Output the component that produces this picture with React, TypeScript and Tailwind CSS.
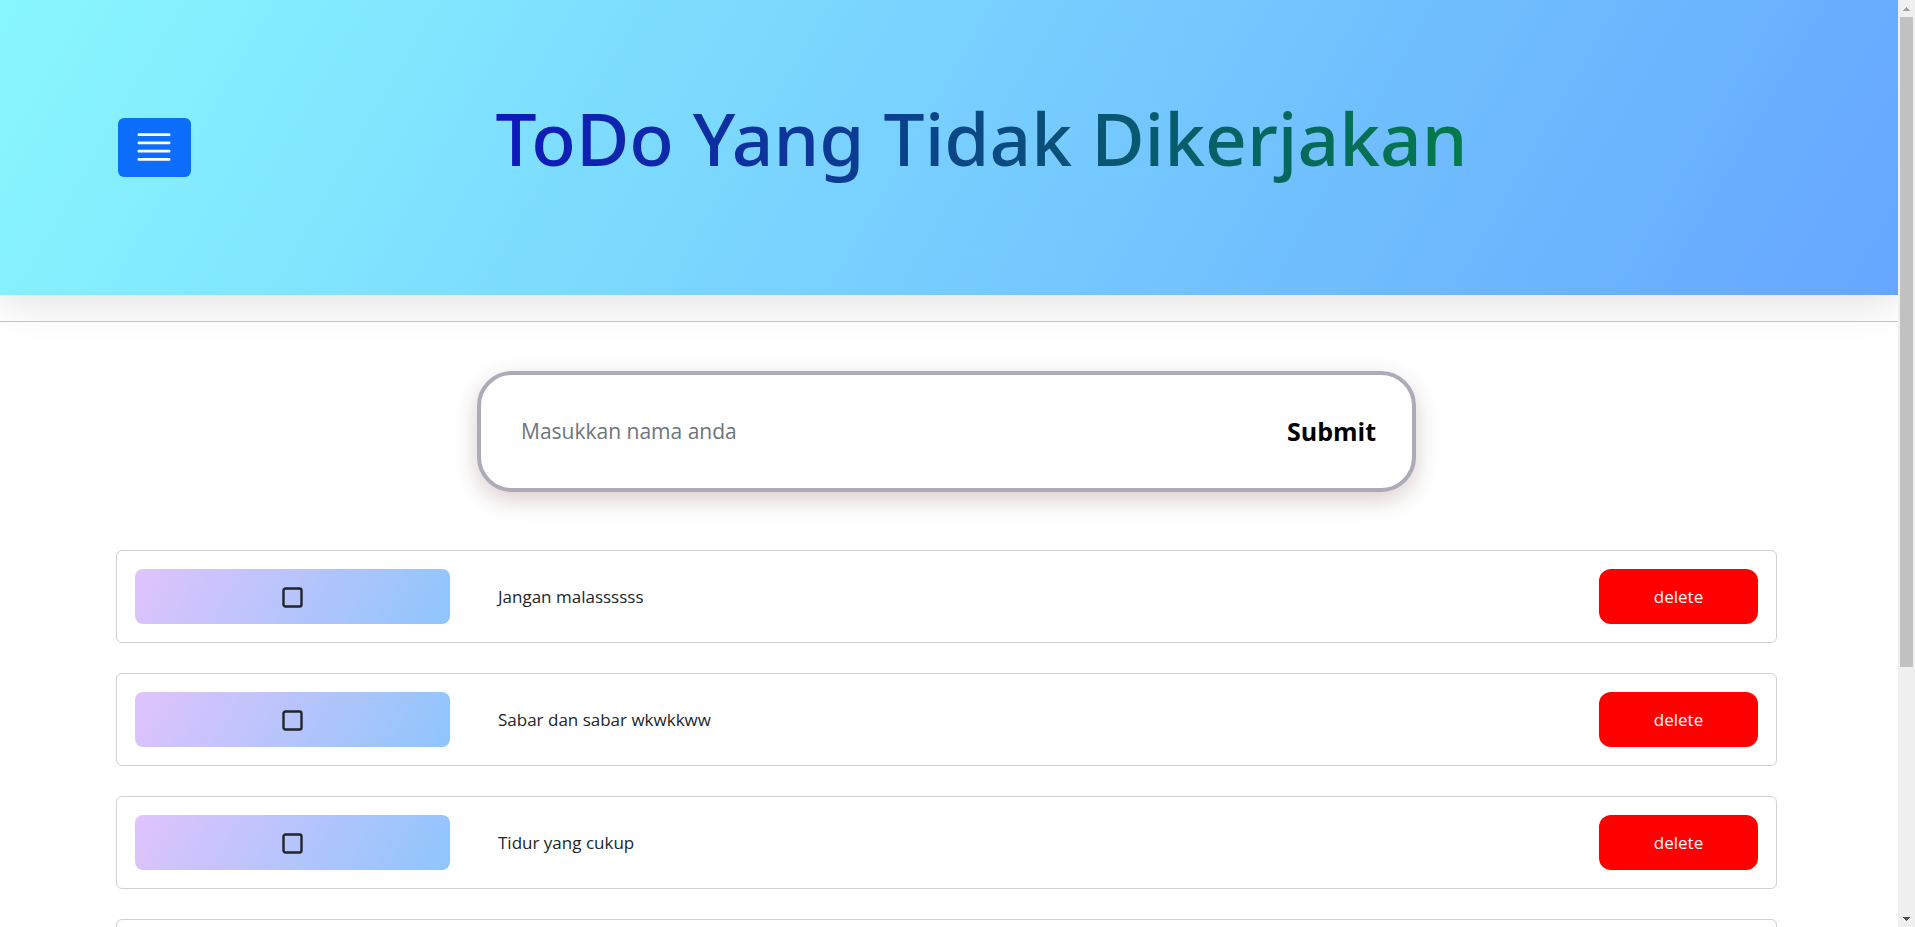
import { BsJustify } from "react-icons/bs";

const todos = [
  "Jangan malassssss",
  "Sabar dan sabar wkwkkww",
  "Tidur yang cukup",
];

function Header() {
  return (
    <header className="relative flex h-[295px] shrink-0 items-center bg-[linear-gradient(120deg,#89f7fe_0%,#66a6ff_100%)] pr-[126px] pl-[118px] shadow-[0_8px_40px_rgba(0,0,0,0.12)]">
      <button
        type="button"
        aria-label="Menu"
        className="flex h-[59px] w-[73px] items-center justify-center rounded-md bg-[#0d6efd] pr-0.5 pb-0.5 text-white"
      >
        <BsJustify size={44} />
      </button>
      <div className="flex flex-1 justify-center pb-5">
        <h1 className="bg-[linear-gradient(to_right,#1018bd,#047a48)] bg-clip-text font-['Noto_Sans','Open_Sans',sans-serif] text-[73px] leading-[100px] font-medium whitespace-nowrap text-transparent">
          ToDo Yang Tidak Dikerjakan
        </h1>
      </div>
    </header>
  );
}

function TodoForm() {
  return (
    <form
      onSubmit={(event) => event.preventDefault()}
      className="mx-auto flex h-[121px] w-full max-w-[939px] items-center rounded-[35px] border-4 border-[#adabba] bg-white pr-9 pl-10 shadow-[0_8px_24px_rgba(80,0,0,0.2)]"
    >
      <input
        type="text"
        aria-label="Nama"
        placeholder="Masukkan nama anda"
        className="min-w-0 flex-1 text-[21px] outline-none placeholder:text-[#6c757d]"
      />
      <button type="submit" className="text-[25px] font-bold text-black">
        Submit
      </button>
    </form>
  );
}

function TodoItem({ text }: { text: string }) {
  return (
    <li className="flex items-center rounded-md border border-[#d0d1d2] bg-white p-[18px]">
      <button
        type="button"
        aria-label={`Selesai: ${text}`}
        className="flex h-[55px] w-[315px] items-center justify-center rounded-lg bg-[linear-gradient(120deg,#e0c3fc_0%,#8ec5fc_100%)] pt-0.5 text-[#212529]"
      >
        <svg width="21" height="21" viewBox="0 0 21 21" fill="none" stroke="currentColor" strokeWidth="2.4">
          <rect x="1.5" y="1.5" width="18" height="18" rx="2" />
        </svg>
      </button>
      <span className="flex-1 px-12 text-[17px] text-[#212529]">{text}</span>
      <button type="button" className="h-[55px] w-[159px] rounded-xl bg-[#ff0000] text-[17px] text-white">
        delete
      </button>
    </li>
  );
}

function ScrollRail() {
  return (
    <div aria-hidden="true" className="flex w-[17px] shrink-0 flex-col items-center bg-[#f0f0f0]">
      <svg width="17" height="17" viewBox="0 0 17 17" shapeRendering="crispEdges">
        <path d="M8 7h1v1h1v1h1v1h1v1H5v-1h1V9h1V8h1z" fill="#a3a3a3" />
      </svg>
      <div className="h-[650px] w-[13px] bg-[#c1c1c1]" />
      <svg className="mt-auto" width="17" height="17" viewBox="0 0 17 17" shapeRendering="crispEdges">
        <path d="M5 7h7v1h-1v1h-1v1H9v1H8v-1H7V9H6V8H5z" fill="#505050" />
      </svg>
    </div>
  );
}

export default function App() {
  return (
    <div className="flex h-screen bg-white font-['Open_Sans','Noto_Sans',sans-serif]">
      <main className="flex min-w-0 flex-1 flex-col overflow-hidden">
        <Header />
        <hr className="mt-[26px] border-[#c8c8ca]" />
        <div className="pt-[49px] pr-[121px] pl-[116px]">
          <TodoForm />
          <ul className="mt-[58px] flex flex-col gap-[30px]">
            {todos.map((text) => (
              <TodoItem key={text} text={text} />
            ))}
            <li className="h-[93px] rounded-md border border-[#d0d1d2] bg-white" />
          </ul>
        </div>
      </main>
      <ScrollRail />
    </div>
  );
}
